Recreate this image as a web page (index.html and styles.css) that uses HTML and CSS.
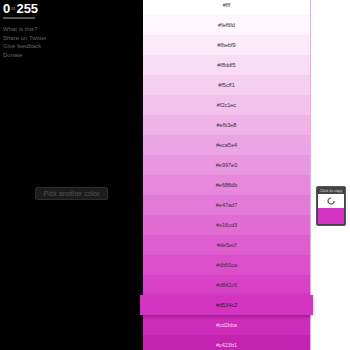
FILE: index.html
```html
<!DOCTYPE html>
<html lang="en">
<head>
    <meta charset="UTF-8">
    <title>0 to 255</title>
    <link rel="stylesheet" href="styles.css">
</head>
<body>
    <div class="page">
        <aside class="sidebar">
            <div class="logo"><span class="num">0</span><span class="to">to</span><span class="num">255</span></div>
            <ul class="links">
                <li>What is this?</li>
                <li>Share on Twitter</li>
                <li>Give feedback</li>
                <li>Donate</li>
            </ul>
            <div class="pick-wrap">
                <button class="pick">Pick another color</button>
            </div>
        </aside>
        <main class="main">
            <ul class="colors">
                <li style="background:#ffffff">#fff</li>
                <li style="background:#fef6fd">#fef6fd</li>
                <li style="background:#fbebf9">#fbebf9</li>
                <li style="background:#f8ddf5">#f8ddf5</li>
                <li style="background:#f5cff1">#f5cff1</li>
                <li style="background:#f2c1ec">#f2c1ec</li>
                <li style="background:#efb3e8">#efb3e8</li>
                <li style="background:#eca5e4">#eca5e4</li>
                <li style="background:#e997e0">#e997e0</li>
                <li style="background:#e688db">#e688db</li>
                <li style="background:#e47ad7">#e47ad7</li>
                <li style="background:#e16cd3">#e16cd3</li>
                <li style="background:#de5ecf">#de5ecf</li>
                <li style="background:#db50ca">#db50ca</li>
                <li style="background:#d842c6">#d842c6</li>
                <li class="selected" style="background:#d534c2">#d534c2</li>
                <li class="dark" style="background:#cd2bba">#cd2bba</li>
                <li class="dark" style="background:#c423b1">#c423b1</li>
            </ul>
            <div class="copy">
                <div class="copy-title">Click to copy</div>
                <div class="copy-white">
                    <svg width="8" height="8" viewBox="0 0 8 8"><path d="M4 1 A3 3 0 1 0 7 4" fill="none" stroke="#555" stroke-width="1.2"/></svg>
                </div>
                <div class="copy-color"></div>
            </div>
        </main>
    </div>
</body>
</html>
```

FILE: styles.css
```css
body {
    margin: 0;
    font-family: "Liberation Sans", Arial, sans-serif;
    background: #fff;
}

.page {
    display: flex;
    height: 350px;
    overflow: hidden;
}

.sidebar {
    width: 143px;
    flex-shrink: 0;
    background: #000;
    padding: 2px 3px;
    box-sizing: border-box;
    display: flex;
    flex-direction: column;
}

.logo {
    color: #fff;
    display: flex;
    align-items: flex-start;
    width: 32px;
    padding-bottom: 2px;
    border-bottom: 2px solid #555;
}

.logo .num {
    font-size: 13px;
    font-weight: bold;
    line-height: 13px;
}

.logo .to {
    font-size: 5px;
    color: #888;
    margin: 3px 1px 0;
}

.links {
    list-style: none;
    margin: 6px 0 0;
    padding: 0;
    color: #666;
    font-size: 6px;
    line-height: 8.5px;
}

.pick-wrap {
    display: flex;
    justify-content: center;
    margin-top: 128px;
}

.pick {
    font-family: inherit;
    font-size: 7px;
    color: #555;
    background: #1c1c1c;
    border: 1px solid #2e2e2e;
    border-radius: 2px;
    padding: 2px 7px;
}

.main {
    flex: 1;
    position: relative;
}

.colors {
    list-style: none;
    margin: -5px 0 0;
    padding: 0;
    width: 167px;
    border-right: 1px solid #f0a8e8;
}

.colors li {
    height: 20px;
    line-height: 20px;
    text-align: center;
    font-size: 5.5px;
    color: #333;
}

.colors li.selected {
    margin: 0 -3px;
    color: #222;
    position: relative;
    box-shadow: 0 1px 4px rgba(0, 0, 0, 0.35);
}

.colors li.dark {
    color: #f4d8f0;
}

.copy {
    position: absolute;
    left: 173px;
    top: 186px;
    width: 30px;
    background: #444;
    border: 1px solid #555;
    border-radius: 2px;
    padding: 1px 1px 1px;
    box-sizing: border-box;
}

.copy-title {
    color: #ddd;
    font-size: 4px;
    text-align: center;
    line-height: 6px;
}

.copy-white {
    background: #fff;
    height: 14px;
    display: flex;
    align-items: center;
    justify-content: center;
}

.copy-color {
    background: #d534c2;
    height: 16px;
}
```
